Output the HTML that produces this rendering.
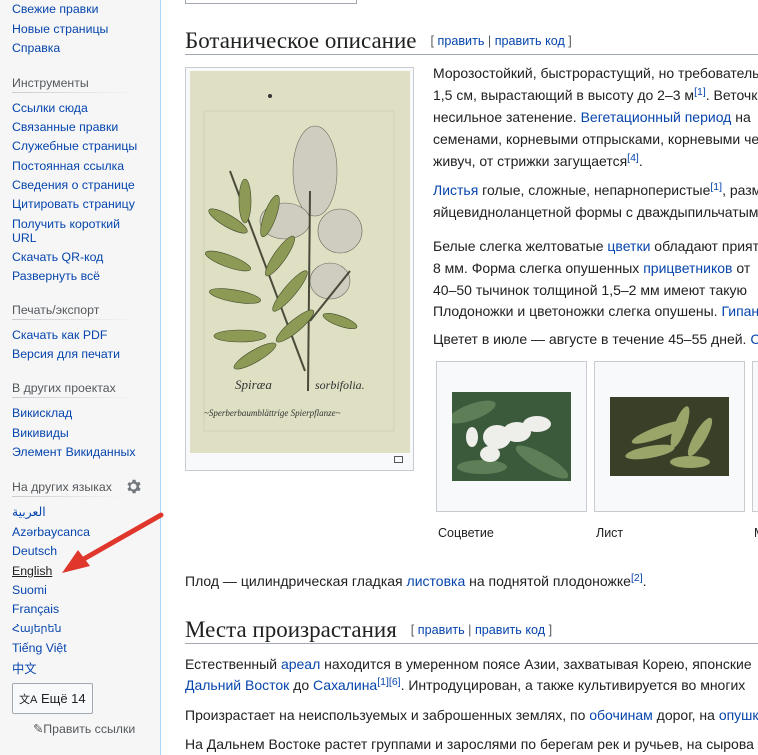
<!DOCTYPE html>
<html><head><meta charset="utf-8"><style>
*{margin:0;padding:0;box-sizing:border-box}
body{width:758px;height:755px;overflow:hidden;position:relative;background:#fff;font-family:"Liberation Sans",sans-serif;color:#202122}
#side{position:absolute;left:0;top:0;width:161px;height:755px;background:#f6f6f6;border-right:1px solid #a7d7f9}
.s{position:absolute;left:12px;font-size:12.3px;color:#0645ad;white-space:nowrap;line-height:14px}
.h{position:absolute;left:12px;font-size:12.3px;color:#54595d;white-space:nowrap;line-height:14px}
.hl{position:absolute;left:12px;width:126px;height:1px;background:linear-gradient(90deg,#c8ccd1,#f6f6f6)}
.t{position:absolute;font-size:14px;line-height:16px;white-space:nowrap;color:#202122}
a,.a{color:#0645ad;text-decoration:none}
sup{font-size:10.5px;line-height:0;vertical-align:5px;color:#0645ad}
.hd{position:absolute;left:185px;font-family:"Liberation Serif",serif;font-size:23px;line-height:26px;white-space:nowrap}
.hd small{font-family:"Liberation Sans",sans-serif;font-size:12.6px;color:#54595d;margin-left:14px;vertical-align:3px}
.hr{position:absolute;left:185px;right:0;height:1px;background:#a2a9b1}
.gb{position:absolute;top:361px;width:151px;height:151px;background:#f8f9fa;border:1px solid #c8ccd1}
</style></head><body>
<div id="side">
<div class="s" style="top:2px">Свежие правки</div>
<div class="s" style="top:22px">Новые страницы</div>
<div class="s" style="top:41px">Справка</div>
<div class="h" style="top:76px">Инструменты</div><div class="hl" style="top:92px"></div>
<div class="s" style="top:101px">Ссылки сюда</div>
<div class="s" style="top:120px">Связанные правки</div>
<div class="s" style="top:139px">Служебные страницы</div>
<div class="s" style="top:159px">Постоянная ссылка</div>
<div class="s" style="top:178px">Сведения о странице</div>
<div class="s" style="top:197px">Цитировать страницу</div>
<div class="s" style="top:217px">Получить короткий<br>URL</div>
<div class="s" style="top:250px">Скачать QR-код</div>
<div class="s" style="top:269px">Развернуть всё</div>
<div class="h" style="top:303px">Печать/экспорт</div><div class="hl" style="top:319px"></div>
<div class="s" style="top:328px">Скачать как PDF</div>
<div class="s" style="top:347px">Версия для печати</div>
<div class="h" style="top:381px">В других проектах</div><div class="hl" style="top:397px"></div>
<div class="s" style="top:406px">Викисклад</div>
<div class="s" style="top:426px">Викивиды</div>
<div class="s" style="top:445px">Элемент Викиданных</div>
<div class="h" style="top:480px">На других языках</div><div class="hl" style="top:496px;width:110px"></div>
<svg style="position:absolute;left:126px;top:479px" width="15" height="15" viewBox="0 0 20 20"><path fill="#72777d" d="M10 6a4 4 0 100 8 4 4 0 000-8zm7.4 5.3l2.1 1.6-2 3.4-2.5-1a7 7 0 01-1.9 1.1L12.7 19H8.7l-.4-2.6a7 7 0 01-1.900-1.1l-2.5 1-2-3.4 2.1-1.6a7 7 0 010-2.2L1.9 7.5l2-3.4 2.5 1a7 7 0 011.9-1.1L8.7 1h4l.4 2.6a7 7 0 011.9 1.1l2.5-1 2 3.4-2.1 1.6a7 7 0 010 2.2z"/></svg>
<div class="s" style="top:505px;font-family:'DejaVu Sans',sans-serif">العربية</div>
<div class="s" style="top:525px">Azərbaycanca</div>
<div class="s" style="top:544px">Deutsch</div>
<div class="s" style="top:564px;color:#202122;text-decoration:underline">English</div>
<div class="s" style="top:583px">Suomi</div>
<div class="s" style="top:602px">Français</div>
<div class="s" style="top:622px;font-family:'DejaVu Sans',sans-serif;font-size:11px">Հայերեն</div>
<div class="s" style="top:641px">Tiếng Việt</div>
<div class="s" style="top:661px;font-family:'Noto Sans CJK SC',sans-serif">中文</div>
<div style="position:absolute;left:12px;top:683px;width:81px;height:31px;border:1px solid #a2a9b1;border-radius:2px;background:#f8f9fa;font-size:13px;line-height:29px;padding-left:6px;color:#202122;white-space:nowrap"><span style="font-size:11px">文A</span> Ещё 14</div>
<div style="position:absolute;left:33px;top:722px;font-size:12.3px;color:#54595d;white-space:nowrap">✎Править ссылки</div>
</div>
<svg style="position:absolute;left:0;top:0" width="758" height="755"><path d="M161 515 L82 560" stroke="#e0372d" stroke-width="5" stroke-linecap="round"/><path d="M62 573 L78 550 L90 566 Z" fill="#e0372d"/></svg>

<div style="position:absolute;left:185px;top:-2px;width:172px;height:6px;border:1px solid #a2a9b1;border-top:none"></div>
<div class="hd" style="top:28px">Ботаническое описание<small>[ <a>править</a> | <a>править код</a> ]</small></div>
<div class="hr" style="top:54px"></div>

<div style="position:absolute;left:185px;top:67px;width:229px;height:404px;border:1px solid #c8ccd1;background:#f8f9fa"></div>
<svg style="position:absolute;left:190px;top:71px" width="220" height="382" viewBox="0 0 220 382">
<rect width="220" height="382" fill="#dedfc3"/>
<rect x="14" y="40" width="190" height="320" fill="none" stroke="#d2d3b6"/>
<circle cx="80" cy="25" r="2" fill="#333"/>
<g fill="#cfcdbf" stroke="#6d6a5f" stroke-width=".6">
<ellipse cx="125" cy="100" rx="22" ry="45"/><ellipse cx="95" cy="150" rx="25" ry="18"/><ellipse cx="150" cy="160" rx="22" ry="22"/><ellipse cx="140" cy="210" rx="20" ry="18"/></g>
<g stroke="#4a4a3a" stroke-width="2" fill="none"><path d="M120 120 L118 320"/><path d="M40 100 L115 300"/><path d="M120 250 L160 200"/></g>
<g fill="#8d9a55" stroke="#3f4a2a" stroke-width=".6">
<ellipse cx="55" cy="130" rx="6" ry="22"/><ellipse cx="38" cy="150" rx="22" ry="6" transform="rotate(30 38 150)"/><ellipse cx="80" cy="145" rx="6" ry="22" transform="rotate(20 80 145)"/>
<ellipse cx="38" cy="190" rx="24" ry="6" transform="rotate(20 38 190)"/><ellipse cx="90" cy="185" rx="6" ry="24" transform="rotate(35 90 185)"/>
<ellipse cx="45" cy="225" rx="26" ry="6" transform="rotate(10 45 225)"/><ellipse cx="100" cy="220" rx="6" ry="26" transform="rotate(40 100 220)"/>
<ellipse cx="50" cy="265" rx="26" ry="6"/><ellipse cx="105" cy="255" rx="6" ry="24" transform="rotate(50 105 255)"/>
<ellipse cx="65" cy="285" rx="24" ry="6" transform="rotate(-30 65 285)"/><ellipse cx="150" cy="250" rx="18" ry="5" transform="rotate(20 150 250)"/></g>
<text x="45" y="318" font-family="Liberation Serif,serif" font-style="italic" font-size="13" fill="#333">Spiræa</text>
<text x="125" y="318" font-family="Liberation Serif,serif" font-style="italic" font-size="12" fill="#333">sorbifolia.</text>
<text x="14" y="345" font-family="Liberation Serif,serif" font-style="italic" font-size="9" fill="#333">~Sperberbaumblättrige Spierpflanze~</text>
</svg>
<div style="position:absolute;left:394px;top:456px;width:9px;height:7px;border:1px solid #54595d"></div>

<div class="t" style="top:65px;left:433px">Морозостойкий, быстрорастущий, но требовательный</div>
<div class="t" style="top:87px;left:433px">1,5 см, вырастающий в высоту до 2–3 м<sup>[1]</sup>. Веточки</div>
<div class="t" style="top:109px;left:433px">несильное затенение. <a>Вегетационный период</a> на</div>
<div class="t" style="top:131px;left:433px">семенами, корневыми отпрысками, корневыми черенками</div>
<div class="t" style="top:153px;left:433px">живуч, от стрижки загущается<sup>[4]</sup>.</div>
<div class="t" style="top:182px;left:433px"><a>Листья</a> голые, сложные, непарноперистые<sup>[1]</sup>, разм</div>
<div class="t" style="top:204px;left:433px">яйцевидноланцетной формы с дваждыпильчатым</div>
<div class="t" style="top:238px;left:433px">Белые слегка желтоватые <a>цветки</a> обладают прият</div>
<div class="t" style="top:260px;left:433px">8 мм. Форма слегка опушенных <a>прицветников</a> от</div>
<div class="t" style="top:282px;left:433px">40–50 тычинок толщиной 1,5–2 мм имеют такую</div>
<div class="t" style="top:303px;left:433px">Плодоножки и цветоножки слегка опушены. <a>Гипан</a></div>
<div class="t" style="top:331px;left:433px">Цветет в июле — августе в течение 45–55 дней. <a>С</a></div>

<div class="gb" style="left:436px"></div><div class="gb" style="left:594px"></div><div class="gb" style="left:752px"></div>
<svg style="position:absolute;left:452px;top:392px" width="119" height="89"><rect width="119" height="89" fill="#3b5a3c"/><g fill="#5d7f58"><ellipse cx="20" cy="20" rx="25" ry="8" transform="rotate(-20 20 20)"/><ellipse cx="90" cy="70" rx="30" ry="8" transform="rotate(30 90 70)"/><ellipse cx="30" cy="75" rx="25" ry="7"/></g><g fill="#eeeeea"><ellipse cx="45" cy="45" rx="14" ry="12"/><ellipse cx="65" cy="40" rx="14" ry="10"/><ellipse cx="85" cy="32" rx="14" ry="8"/><ellipse cx="38" cy="62" rx="10" ry="8"/><ellipse cx="20" cy="45" rx="6" ry="10"/></g></svg>
<svg style="position:absolute;left:610px;top:397px" width="119" height="79"><rect width="119" height="79" fill="#3a3f28"/><g fill="#9aa56a"><ellipse cx="50" cy="35" rx="30" ry="6" transform="rotate(-20 50 35)"/><ellipse cx="70" cy="30" rx="6" ry="22" transform="rotate(20 70 30)"/><ellipse cx="90" cy="40" rx="6" ry="22" transform="rotate(30 90 40)"/><ellipse cx="40" cy="55" rx="25" ry="6" transform="rotate(-10 40 55)"/><ellipse cx="80" cy="65" rx="20" ry="6"/></g></svg>
<div class="t" style="top:525px;left:438px;font-size:12.5px">Соцветие</div>
<div class="t" style="top:525px;left:596px;font-size:12.5px">Лист</div>
<div class="t" style="top:525px;left:754px;font-size:12.5px">М</div>

<div class="t" style="top:573px;left:185px">Плод — цилиндрическая гладкая <a>листовка</a> на поднятой плодоножке<sup>[2]</sup>.</div>

<div class="hd" style="top:617px">Места произрастания<small>[ <a>править</a> | <a>править код</a> ]</small></div>
<div class="hr" style="top:643px"></div>
<div class="t" style="top:656px;left:185px">Естественный <a>ареал</a> находится в умеренном поясе Азии, захватывая Корею, японские</div>
<div class="t" style="top:677px;left:185px"><a>Дальний Восток</a> до <a>Сахалина</a><sup>[1][6]</sup>. Интродуцирован, а также культивируется во многих</div>
<div class="t" style="top:707px;left:185px">Произрастает на неиспользуемых и заброшенных землях, по <a>обочинам</a> дорог, на <a>опушках</a></div>
<div class="t" style="top:736px;left:185px">На Дальнем Востоке растет группами и зарослями по берегам рек и ручьев, на сырова</div>
</body></html>
